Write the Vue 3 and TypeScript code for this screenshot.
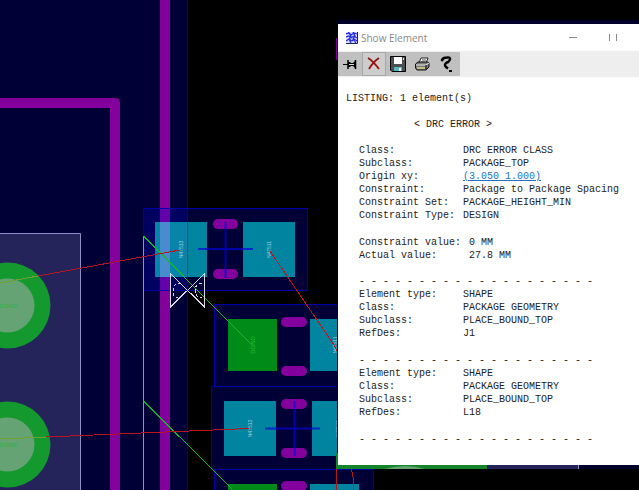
<script setup lang="ts">
interface Row { label: string; value: string; link?: boolean }
interface Pad { x: number; y: number; w: number; h: number; green?: boolean; name: string }

const constraintRows: Row[] = [
  { label: 'Class:', value: 'DRC ERROR CLASS' },
  { label: 'Subclass:', value: 'PACKAGE_TOP' },
  { label: 'Origin xy:', value: '(3.050 1.000)', link: true },
  { label: 'Constraint:', value: 'Package to Package Spacing' },
  { label: 'Constraint Set:', value: 'PACKAGE_HEIGHT_MIN' },
  { label: 'Constraint Type:', value: 'DESIGN' },
]

const valueRows: Row[] = [
  { label: 'Constraint value:', value: '0 MM' },
  { label: 'Actual value:', value: '27.8 MM' },
]

const shapeRows = (refDes: string): Row[] => [
  { label: 'Element type:', value: 'SHAPE' },
  { label: 'Class:', value: 'PACKAGE GEOMETRY' },
  { label: 'Subclass:', value: 'PLACE_BOUND_TOP' },
  { label: 'RefDes:', value: refDes },
]

const elements: Row[][] = [shapeRows('J1'), shapeRows('L18')]
const rule = Array(20).fill('-').join(' ')

const packages = [
  { x: 143, y: 208, w: 164, h: 82 },
  { x: 214, y: 304, w: 159, h: 82 },
  { x: 211, y: 386, w: 162, h: 83 },
  { x: 214, y: 469, w: 159, h: 82 },
]

const pads: Pad[] = [
  { x: 155, y: 222, w: 52, h: 55, name: 'N47513' },
  { x: 243, y: 222, w: 52, h: 55, name: 'N47511' },
  { x: 228, y: 319, w: 49, h: 52, green: true, name: 'DGND' },
  { x: 310, y: 319, w: 49, h: 52, name: 'N47511' },
  { x: 224, y: 401, w: 52, h: 55, name: 'N47513' },
  { x: 312, y: 401, w: 52, h: 55, name: 'N47511' },
  { x: 228, y: 484, w: 49, h: 52, green: true, name: '' },
  { x: 310, y: 484, w: 49, h: 52, name: '' },
]

const slots = [
  { x: 213, y: 219, w: 25 }, { x: 213, y: 269, w: 25 },
  { x: 281, y: 317, w: 26 }, { x: 281, y: 366, w: 26 },
  { x: 281, y: 399, w: 26 }, { x: 281, y: 448, w: 26 },
  { x: 281, y: 481, w: 26 },
]

const vias = [305, 444]
</script>

<template>
  <main class="workspace">
    <svg class="board" aria-label="Board layout">
      <rect class="area" x="0" y="0" width="187" height="100%" />
      <path class="edge" d="M187.500 0V2000" />
      <path class="magenta" d="M0 98H115Q120 98 120 103V2000H110V108H0Z" />
      <rect class="magenta" x="160" y="0" width="10" height="100%" />
      <rect class="magenta" x="336" y="38" width="3" height="22" />
      <path class="plane" d="M-2 233.500H80.500V2000H-2Z" />

      <g v-for="y in vias" :key="y">
        <circle class="ring" cx="7.500" :cy="y + 0.5" r="43" />
        <circle class="hole" cx="7.500" :cy="y + 0.5" r="27" />
        <text class="via-name" x="17" :y="y + 3" text-anchor="end">DGND</text>
      </g>

      <rect
        v-for="(p, i) in packages" :key="'k' + i" class="package"
        :x="p.x + 0.5" :y="p.y + 0.5" :width="p.w" :height="p.h"
      />
      <rect
        v-for="(p, i) in pads" :key="'p' + i" :class="p.green ? 'pad-green' : 'pad'"
        :x="p.x" :y="p.y" :width="p.w" :height="p.h"
      />
      <rect class="pad-area" x="155" y="222" width="32" height="55" />
      <rect class="pad-overlap" x="160" y="222" width="10" height="55" />
      <rect
        v-for="(s, i) in slots" :key="'s' + i" class="magenta"
        :x="s.x" :y="s.y" :width="s.w" height="10" rx="5"
      />
      <path class="cross" d="M198 249H253M225.500 222V278M265 428.500H320M294.500 401V456" />
      <path class="edge dim" d="M187.500 208V290" />
      <text
        v-for="(p, i) in pads" :key="'t' + i" :class="p.green ? 'net-green' : 'net'"
        :transform="`translate(${p.x + p.w / 2 + 2} ${p.y + p.h / 2}) rotate(-90)`"
        text-anchor="middle"
      >{{ p.name }}</text>

      <path class="green" d="M143.500 236V2000" />
      <path class="green thin" d="M143.500 236L253 346M143.500 401L232 489" />
      <path class="red" d="M38 276L180 250M270 251L334 345L343 362M46 437L249 428.500M336.500 467V490M351 467Q354 478 354 490" />
      <path class="olive" d="M0 283L38 276M0 439L46 437" />

      <path class="marker" d="M170.500 273.500V307L204.500 273.500V307L170.500 273.500" />
      <path class="marker dashed" d="M181 283Q173 283 173 291Q173 299 180 298M202 283Q195 284 195 291Q196 298 202 298" />

      <rect class="frame" x="337" y="20" width="100%" height="449" />
      <rect class="frame-green" x="336" y="453" width="151" height="16" />
      <path class="hole" d="M385 469Q405 463 425 469Z" />
      <rect class="frame-plane" x="487" y="465" width="91" height="4" />
      <path class="plane-edge" d="M578.500 465V469" />
    </svg>

    <section class="dialog" aria-labelledby="dialog-title">
      <header class="titlebar">
        <svg class="app-icon" viewBox="0 0 12 12" aria-hidden="true">
          <path fill="#d8dcff" d="M0 0H11V11H0Z" />
          <path fill="none" stroke="#2629dc" stroke-width="1.200" d="M0 2L3 1L5 3L8 1L11 2M0 5L3 4L5 6L8 4L11 6M0 9L3 7L6 9L8 7L11 9M2 0L5 4L3 7L5 11M7 0L9 4L7 7L10 11" />
          <path fill="none" stroke="#17246b" d="M11.500 0V11.500H0" />
        </svg>
        <h1 id="dialog-title">Show Element</h1>
        <button class="win" type="button" aria-label="Minimize">
          <svg width="12" height="10"><path d="M2 4.500H10" /></svg>
        </button>
        <button class="win" type="button" aria-label="Maximize">
          <svg width="12" height="10"><path d="M2.500 1V8M9.500 1V8" /></svg>
        </button>
      </header>

      <nav class="toolbar" aria-label="Report tools">
        <button type="button" aria-label="Pin">
          <svg viewBox="0 0 16 16"><path d="M1 8.500H6" stroke="#000" /><path d="M6 4V13M13.500 4V13" stroke="#000" stroke-width="1.500" /><path d="M6 6H8L9 7H11L13 5V12L11 10H9L8 11H6Z" fill="#000" /><path d="M7 8.500H12" stroke="#ddd" /></svg>
        </button>
        <button class="raised" type="button" aria-label="Close">
          <svg viewBox="0 0 16 16"><path d="M2 2Q7 5 13 13M13 2Q7 6 3 13" fill="none" stroke="#96120f" stroke-width="1.800" /></svg>
        </button>
        <button type="button" aria-label="Save">
          <svg viewBox="0 0 16 16"><path d="M.5 .5H15.500V15.500H2L.5 14Z" fill="#4a4e50" stroke="#000" /><path d="M4 1H12V8H4Z" fill="#fff" /><path d="M13 2H14V4H13Z" fill="#ddd" /><path d="M4 11H12V15H4Z" fill="#55b8bd" /><path d="M9 12H11V15H9Z" fill="#efffff" /></svg>
        </button>
        <button type="button" aria-label="Print">
          <svg viewBox="0 0 16 16"><path d="M5 7L7 2H14L12 7Z" fill="#fff" stroke="#222" /><path d="M8 4H12M7 6H11" stroke="#555" /><path d="M1.500 8L4 6H14L15 7V11L12 14H3L1.500 12Z" fill="#777" stroke="#111" /><path d="M2 9H12L15 7" fill="none" stroke="#eee" /><path d="M3 12H11" stroke="#d8d48b" stroke-width="1.500" /><path d="M12 9V13" stroke="#111" /></svg>
        </button>
        <button type="button" aria-label="Help">
          <svg viewBox="0 0 16 16"><path d="M4 5L3 4Q4 1.500 8 1.500Q11.500 1 11 3.500Q10 6 7 7Q5 9 7 11L9 12.500" fill="none" stroke="#000" stroke-width="2.400" /><path d="M10 14H13V16H10Z" fill="#000" /></svg>
        </button>
      </nav>

      <div class="report">
        <p>LISTING: 1 element(s)</p>
        <h2>&lt; DRC ERROR &gt;</h2>
        <dl>
          <template v-for="r in constraintRows" :key="r.label">
            <dt>{{ r.label }}</dt>
            <dd><a v-if="r.link" href="#">{{ r.value }}</a><template v-else>{{ r.value }}</template></dd>
          </template>
        </dl>
        <dl class="values">
          <template v-for="r in valueRows" :key="r.label">
            <dt>{{ r.label }}</dt>
            <dd>{{ r.value }}</dd>
          </template>
        </dl>
        <div v-for="(rows, i) in elements" :key="i">
          <p class="rule">{{ rule }}</p>
          <dl>
            <template v-for="r in rows" :key="r.label">
              <dt>{{ r.label }}</dt>
              <dd>{{ r.value }}</dd>
            </template>
          </dl>
        </div>
        <p class="rule">{{ rule }}</p>
      </div>
    </section>
  </main>
</template>

<style>
body {
  margin: 0;
  background: #000;
}
</style>

<style scoped>
.workspace {
  position: relative;
  min-height: 100vh;
  overflow: hidden;
  background: #000;
}

.board {
  position: absolute;
  inset: 0;
  width: 100%;
  height: 100%;
}

.area { fill: #000037; }
.edge { stroke: #00009c; }
.dim { opacity: 0.4; }
.magenta { fill: #84009c; }
.plane { fill: #24245a; stroke: #8c8cc8; }
.plane-edge { stroke: #8c8cc8; }
.ring { fill: #14992e; }
.hole { fill: #66a374; }
.package { fill: rgba(0, 0, 220, 0.25); stroke: #0000a8; }
.pad { fill: #0084a0; }
.pad-area { fill: #0884a8; }
.pad-green { fill: #008a18; }
.pad-overlap { fill: #4a8ace; }
.cross { stroke: #0000d8; stroke-width: 2; opacity: 0.7; }
.green { fill: none; stroke: #50c468; shape-rendering: crispEdges; }
.thin { stroke: #14b82c; }
.red { fill: none; stroke: #b8141c; shape-rendering: crispEdges; }
.olive { stroke: #70a030; shape-rendering: crispEdges; }
.marker { fill: none; stroke: #d8d8e8; shape-rendering: crispEdges; }
.dashed { stroke-dasharray: 3 2; }
.frame { fill: #00002a; }
.frame-green { fill: #14852b; }
.frame-plane { fill: #24245a; }

.net,
.net-green,
.via-name {
  font-family: "Liberation Sans", sans-serif;
  font-size: 6px;
  fill: #a0d0dc;
}

.net { font-size: 5px; }
.net-green { fill: #20c030; }
.via-name { fill: #28b43c; }

.dialog {
  position: absolute;
  top: 24px;
  left: 338px;
  right: 0;
  background: #fff;
}

.titlebar {
  display: flex;
  align-items: center;
  height: 27px;
  padding-left: 8px;
}

.app-icon {
  width: 12px;
  height: 12px;
  flex: none;
}

h1 {
  flex: 1;
  margin: 0 0 0 3px;
  font: 10px/16px "Open Sans", "Noto Sans", sans-serif;
  color: #888;
  white-space: nowrap;
}

button {
  display: flex;
  align-items: center;
  justify-content: center;
  padding: 0;
  border: 0;
  background: none;
}

.win {
  width: 40px;
  height: 24px;
}

.win:last-child { margin-right: 6px; }
.win path { stroke: #8a8a8a; }

.toolbar {
  display: flex;
  padding: 1px 0;
  background: #eee;
}

.toolbar button {
  width: 24px;
  height: 24px;
  background: #c0c0c0;
}

.toolbar button:last-child {
  width: 26px;
}

.toolbar .raised {
  box-sizing: border-box;
  border: 1px solid #a8a8a8;
  background: #cdcdcd;
}

.toolbar svg {
  width: 16px;
  height: 16px;
  fill: none;
}

.report {
  display: flex;
  flex-direction: column;
  gap: 13px;
  padding: 15px 8px 19px;
  font: 10px/13px "Liberation Mono", monospace;
  color: #222;
  white-space: nowrap;
}

p,
h2,
dl,
dd {
  margin: 0;
}

h2 {
  padding-left: 68px;
  font: inherit;
}

dl {
  display: grid;
  grid-template-columns: 104px 1fr;
  padding: 0 0 1px 13px;
}

.values {
  grid-template-columns: 110px 1fr;
  padding-bottom: 0;
}

.rule {
  padding-left: 13px;
}

a {
  color: #2574c4;
}
</style>
